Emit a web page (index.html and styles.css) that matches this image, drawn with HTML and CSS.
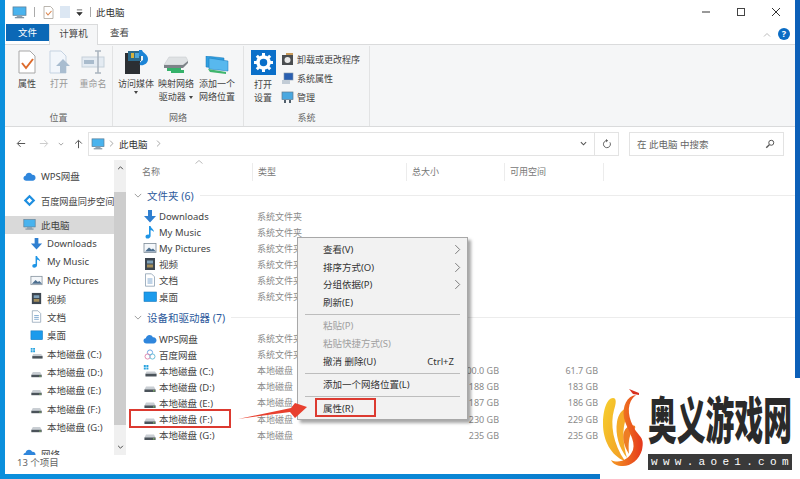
FILE: index.html
```html
<!DOCTYPE html>
<html lang="zh-CN">

<head>
    <meta charset="UTF-8">
    <title>此电脑</title>
    <link rel="stylesheet" href="styles.css">
</head>

<body>
    <svg class="defs" width="0" height="0">
        <defs>
            <symbol id="pc" viewBox="0 0 16 14">
                <rect x="1" y="1" width="14" height="9" fill="#49b3ee" stroke="#5a7d96" stroke-width=".8"/>
                <rect x="5" y="10" width="6" height="2" fill="#8fa3b3"/>
                <rect x="3" y="12" width="10" height="1.2" fill="#6f8494"/>
            </symbol>
            <symbol id="down" viewBox="0 0 14 14">
                <path d="M5 1h4v6h4l-6 6.500L1 7h4z" fill="#2f7fd0"/>
            </symbol>
            <symbol id="music" viewBox="0 0 14 14">
                <path d="M6 1h1.600c.3 2.500 3.400 3 3.400 6-1-1.300-2.200-1.800-3.400-1.800V11c0 1.500-1.500 2.600-3 2.600S2.500 12.800 2.500 11.500 4 9.300 6 9.700z" fill="#1f95e6"/>
            </symbol>
            <symbol id="pics" viewBox="0 0 14 14">
                <rect x="1" y="2.500" width="12" height="9" fill="#f4f7fa" stroke="#7d8b97" stroke-width=".8"/>
                <path d="M2 10.500l4-4 2.500 2 1.500-1 3 3z" fill="#4d6f8f"/>
            </symbol>
            <symbol id="video" viewBox="0 0 14 14">
                <rect x="2" y="1" width="10" height="12" fill="#3d4650"/>
                <rect x="4" y="3.500" width="6" height="3" fill="#7fa0b8"/>
                <rect x="4" y="7.500" width="6" height="3" fill="#a58f5c"/>
            </symbol>
            <symbol id="doc" viewBox="0 0 14 14">
                <path d="M2.500.8h6l3 3v9.400h-9z" fill="#fff" stroke="#8ca0b3" stroke-width=".8"/>
                <path d="M4.500 6h5M4.500 8h5M4.500 10h5" stroke="#5f93c4" stroke-width=".8"/>
            </symbol>
            <symbol id="desk" viewBox="0 0 14 14">
                <rect x="1" y="2" width="12.500" height="9.500" fill="#1b9bec" stroke="#1778bd" stroke-width=".6"/>
            </symbol>
            <symbol id="cloud" viewBox="0 0 14 14">
                <path d="M3.500 11.500C1.700 11.500.5 10.300.5 8.800s1-2.500 2.300-2.600C3.200 4.300 4.700 3 6.500 3c1.500 0 2.800.9 3.300 2.200 2-.4 3.700 1 3.700 3.100 0 1.800-1.300 3.200-3 3.200z" fill="#2f86dc"/>
            </symbol>
            <symbol id="baidu" viewBox="0 0 14 14">
                <path d="M7 2.500L11.500 7 7 11.500 2.500 7z" fill="none" stroke="#1f8fe0" stroke-width="2.400"/>
            </symbol>
            <symbol id="baidu2" viewBox="0 0 14 14">
                <circle cx="7" cy="4.500" r="2.600" fill="none" stroke="#6fa8e6" stroke-width="1"/>
                <circle cx="4.600" cy="8.500" r="2.600" fill="none" stroke="#e28bb0" stroke-width="1"/>
                <circle cx="9.400" cy="8.500" r="2.600" fill="none" stroke="#6fc0d8" stroke-width="1"/>
            </symbol>
            <symbol id="drive" viewBox="0 0 14 14">
                <path d="M3 6.500h8l1.500 3v2.500h-11V9.500z" fill="#c9ced3"/>
                <rect x="1.500" y="9.500" width="11" height="2.500" fill="#4b535a"/>
                <rect x="10" y="10.400" width="1.600" height="1" fill="#8fd06a"/>
            </symbol>
            <symbol id="cdrive" viewBox="0 0 14 14">
                <path d="M3.500 7.500h8.500l1.500 2v3H2.500v-3z" fill="#c9ced3"/>
                <rect x="2.500" y="9.800" width="11" height="2.600" fill="#4b535a"/>
                <path d="M.8 1h2v2h-2zM3.400 1h2v2h-2zM.8 3.600h2v2h-2zM3.400 3.600h2v2h-2z" fill="#28a3df"/>
            </symbol>
            <symbol id="chev-r" viewBox="0 0 8 12">
                <path d="M1.500 1l5 5-5 5" fill="none" stroke="#6a6a6a" stroke-width="1"/>
            </symbol>
        </defs>
    </svg>

    <div class="window">
        <!-- title bar -->
        <div class="titlebar">
            <svg class="tb-pc"><use href="#pc"/></svg>
            <span class="tb-sep"></span>
            <svg class="tb-check" viewBox="0 0 11 13">
                <path d="M1 .5h6.500L10 3v9.500H1z" fill="#fff" stroke="#a9a39a" stroke-width=".8"/>
                <path d="M3 6.500l2 2.500 3.500-4" fill="none" stroke="#d9824a" stroke-width="1.100"/>
            </svg>
            <span class="tb-blank"></span>
            <svg class="tb-drop" viewBox="0 0 8 8"><path d="M1 1h6M1 4h6L4 7.500z" stroke="#333" stroke-width=".8" fill="#333"/></svg>
            <span class="tb-sep"></span>
            <span class="tb-title">此电脑</span>
            <div class="win-btns">
                <svg viewBox="0 0 10 10"><path d="M1 5h8" stroke="#555" stroke-width="1.200"/></svg>
                <svg viewBox="0 0 10 10"><rect x="1.500" y="1.500" width="7" height="7" fill="none" stroke="#444" stroke-width="1"/></svg>
                <svg viewBox="0 0 10 10"><path d="M1 1l8 8M9 1l-8 8" stroke="#333" stroke-width="1"/></svg>
            </div>
        </div>

        <!-- tabs -->
        <div class="tabs">
            <div class="tab tab-file">文件</div>
            <div class="tab tab-active">计算机</div>
            <div class="tab">查看</div>
            <svg class="tab-up" viewBox="0 0 8 5"><path d="M1 4.500l3-3 3 3" fill="none" stroke="#bbb" stroke-width="1"/></svg>
            <div class="help">?</div>
        </div>

        <!-- ribbon -->
        <div class="ribbon">
            <div class="rb-group rb-place">
                <div class="rb-items">
                    <div class="rb-btn w-big">
                        <svg class="rb-ico" viewBox="0 0 24 24">
                            <path d="M4 1h11l5 5v17H4z" fill="#fff" stroke="#a7a7a7"/>
                            <path d="M7 13l4 5 7-9" fill="none" stroke="#dd6b2c" stroke-width="2"/>
                        </svg>
                        <span>属性</span>
                    </div>
                    <div class="rb-btn w-big off">
                        <svg class="rb-ico" viewBox="0 0 24 24">
                            <path d="M3 1h11l5 5v17H3z" fill="#f2f6fb" stroke="#c5d3e2"/>
                            <path d="M16 9l7 7h-4v7h-6v-7H9z" fill="#a9bdd0"/>
                        </svg>
                        <span>打开</span>
                    </div>
                    <div class="rb-btn w-ren off">
                        <svg class="rb-ico" viewBox="0 0 24 24">
                            <rect x="1" y="7" width="22" height="10" fill="#e4ebf2" stroke="#c5d0da"/>
                            <rect x="3" y="10" width="10" height="4" fill="#a9bbcc"/>
                            <path d="M14 1h6M14 23h6M17 1v22" stroke="#a9b4bf" stroke-width="1.500"/>
                        </svg>
                        <span>重命名</span>
                    </div>
                </div>
                <div class="rb-label">位置</div>
            </div>
            <div class="rb-group rb-net">
                <div class="rb-items">
                    <div class="rb-btn w-media">
                        <svg class="rb-ico" viewBox="0 0 24 24">
                            <rect x="1" y="3" width="15" height="21" fill="#2b2f33"/>
                            <rect x="4" y="1" width="13" height="10" fill="#2b6a8c"/>
                            <rect x="7" y="3" width="3" height="5" fill="#d4b23e"/>
                            <rect x="11" y="3" width="4" height="5" fill="#4fa6d8"/>
                            <path d="M15 0h3c.5 3 6 4 6 9 0 5-5 7-8 6-1-2 1-4 3-5V6h-4z" fill="#1c84d6"/>
                        </svg>
                        <span>访问媒体</span>
                        <i class="caret"></i>
                    </div>
                    <div class="rb-btn w-map">
                        <svg class="rb-ico" viewBox="0 0 26 18">
                            <path d="M6 1h17l2 4-5 4H1z" fill="#dfe2e4" stroke="#c2c6ca" stroke-width=".5"/>
                            <path d="M1 9h19l5-4v2l-5 5H1z" fill="#7d8388"/>
                            <path d="M4 12h14v2h3v3H8v-2H4z" fill="#35b26a"/>
                        </svg>
                        <span>映射网络</span>
                        <span>驱动器 <i class="caret inline"></i></span>
                    </div>
                    <div class="rb-btn w-add">
                        <svg class="rb-ico" viewBox="0 0 26 18">
                            <path d="M2 0l18 2v11L2 11z" fill="#2f9fe0" stroke="#1976b8" stroke-width=".5"/>
                            <path d="M5 2l19 3v10L5 13z" fill="#58b8ee" stroke="#1976b8" stroke-width=".5"/>
                            <path d="M4 13l18 3v2L6 16z" fill="#3fb56e"/>
                        </svg>
                        <span>添加一个</span>
                        <span>网络位置</span>
                    </div>
                </div>
                <div class="rb-label">网络</div>
            </div>
            <div class="rb-group rb-sys">
                <div class="rb-items">
                    <div class="rb-btn w-open">
                        <svg class="rb-gear" viewBox="0 0 25 25">
                            <rect width="25" height="25" fill="#0a6fc9"/>
                            <circle cx="12.500" cy="12.500" r="5.500" fill="none" stroke="#fff" stroke-width="3.500"/>
                            <path d="M12.500 3v3.500M12.500 18.500V22M3 12.500h3.500M18.500 12.500H22M5.800 5.800l2.500 2.500M16.700 16.700l2.500 2.500M19.200 5.800l-2.500 2.500M8.300 16.700l-2.500 2.500" stroke="#fff" stroke-width="3"/>
                        </svg>
                        <span>打开</span>
                        <span>设置</span>
                    </div>
                    <div class="rb-small">
                        <div class="rb-sm-row">
                            <svg viewBox="0 0 13 13"><rect x="1" y="2" width="11" height="10" fill="#4a4d50"/><circle cx="6.500" cy="7" r="3" fill="#e8e8e8"/><path d="M5 0h7v2H5z" fill="#c89a5a"/></svg>
                            <span>卸载或更改程序</span>
                        </div>
                        <div class="rb-sm-row">
                            <svg viewBox="0 0 13 13"><rect x="3" y="1" width="9" height="7" fill="#2a5fb0" stroke="#8296aa" stroke-width=".6"/><rect x="1" y="8" width="8" height="4" fill="#c2ccd6"/></svg>
                            <span>系统属性</span>
                        </div>
                        <div class="rb-sm-row">
                            <svg viewBox="0 0 13 13"><rect x="1" y="1" width="11" height="7.500" fill="#4aa8e0" stroke="#5e7a8f" stroke-width=".7"/><path d="M3 9h2v3H3zM8 9h2v3H8z" fill="#52606c"/></svg>
                            <span>管理</span>
                        </div>
                    </div>
                </div>
                <div class="rb-label">系统</div>
            </div>
        </div>

        <!-- address bar -->
        <div class="addrbar">
            <div class="addr-nav">
                <svg class="nb-back" viewBox="0 0 12 10"><path d="M11 5H2M5.500 1L1.500 5l4 4" fill="none" stroke="#555" stroke-width="1.200"/></svg>
                <svg class="nb-fwd" viewBox="0 0 12 10"><path d="M1 5h9M6.500 1l4 4-4 4" fill="none" stroke="#ccc" stroke-width="1.200"/></svg>
                <svg class="nb-drop" viewBox="0 0 8 5"><path d="M1 1l3 3 3-3" fill="none" stroke="#888" stroke-width="1"/></svg>
                <svg class="nb-up" viewBox="0 0 10 12"><path d="M5 11V2M1 5.500l4-4 4 4" fill="none" stroke="#555" stroke-width="1.200"/></svg>
            </div>
            <div class="addr-box">
                <svg class="addr-pc"><use href="#pc"/></svg>
                <svg class="addr-chev"><use href="#chev-r"/></svg>
                <span class="addr-text">此电脑</span>
                <svg class="addr-chev after"><use href="#chev-r"/></svg>
                <svg class="addr-down" viewBox="0 0 8 5"><path d="M1 1l3 3 3-3" fill="none" stroke="#555" stroke-width="1.200"/></svg>
                <div class="addr-refresh">
                    <svg viewBox="0 0 12 12"><path d="M9.500 4A4.200 4.200 0 1 1 6 2H4.500M5 .5L6.800 2 5 3.500" fill="none" stroke="#555" stroke-width="1.100"/></svg>
                </div>
            </div>
            <div class="search-box">
                <span>在 此电脑 中搜索</span>
                <svg viewBox="0 0 12 12"><circle cx="7.500" cy="4.500" r="3" fill="none" stroke="#555" stroke-width="1.200"/><path d="M5.200 6.800L1.500 10.500" stroke="#555" stroke-width="1.600"/></svg>
            </div>
        </div>

        <!-- main -->
        <div class="main">
            <div class="nav">
                <div class="nav-list">
                    <div class="nav-row top"><svg><use href="#cloud"/></svg>WPS网盘</div>
                    <div class="nav-row top gap"><svg><use href="#baidu"/></svg>百度网盘同步空间</div>
                    <div class="nav-row top selected"><svg><use href="#pc"/></svg>此电脑</div>
                    <div class="nav-row"><svg><use href="#down"/></svg>Downloads</div>
                    <div class="nav-row"><svg><use href="#music"/></svg>My Music</div>
                    <div class="nav-row"><svg><use href="#pics"/></svg>My Pictures</div>
                    <div class="nav-row"><svg><use href="#video"/></svg>视频</div>
                    <div class="nav-row"><svg><use href="#doc"/></svg>文档</div>
                    <div class="nav-row"><svg><use href="#desk"/></svg>桌面</div>
                    <div class="nav-row"><svg><use href="#cdrive"/></svg>本地磁盘 (C:)</div>
                    <div class="nav-row"><svg><use href="#drive"/></svg>本地磁盘 (D:)</div>
                    <div class="nav-row"><svg><use href="#drive"/></svg>本地磁盘 (E:)</div>
                    <div class="nav-row"><svg><use href="#drive"/></svg>本地磁盘 (F:)</div>
                    <div class="nav-row"><svg><use href="#drive"/></svg>本地磁盘 (G:)</div>
                    <div class="nav-row top net"><svg><use href="#cloud"/></svg>网络</div>
                </div>
                <div class="nav-scroll">
                    <svg viewBox="0 0 8 5"><path d="M1 4l3-3 3 3" fill="none" stroke="#444" stroke-width="1.200"/></svg>
                    <div class="nav-thumb"></div>
                    <svg viewBox="0 0 8 5"><path d="M1 1l3 3 3-3" fill="none" stroke="#444" stroke-width="1.200"/></svg>
                </div>
            </div>

            <div class="content">
                <div class="col-head">
                    <svg class="sort-up" viewBox="0 0 8 4"><path d="M.5 3.500L4 .5l3.500 3" fill="none" stroke="#aaa" stroke-width=".8"/></svg>
                    <span class="c-name">名称</span>
                    <span class="c-type">类型</span>
                    <span class="c-size">总大小</span>
                    <span class="c-free">可用空间</span>
                </div>
                <div class="group-head">
                    <svg viewBox="0 0 10 6"><path d="M1 1l4 4 4-4" fill="none" stroke="#888" stroke-width="1"/></svg>
                    <span>文件夹 (6)</span><i></i>
                </div>
                <div class="row"><svg><use href="#down"/></svg><span class="c-name">Downloads</span><span class="c-type">系统文件夹</span></div>
                <div class="row"><svg><use href="#music"/></svg><span class="c-name">My Music</span><span class="c-type">系统文件夹</span></div>
                <div class="row"><svg><use href="#pics"/></svg><span class="c-name">My Pictures</span><span class="c-type">系统文件夹</span></div>
                <div class="row"><svg><use href="#video"/></svg><span class="c-name">视频</span><span class="c-type">系统文件夹</span></div>
                <div class="row"><svg><use href="#doc"/></svg><span class="c-name">文档</span><span class="c-type">系统文件夹</span></div>
                <div class="row"><svg><use href="#desk"/></svg><span class="c-name">桌面</span><span class="c-type">系统文件夹</span></div>
                <div class="group-head second">
                    <svg viewBox="0 0 10 6"><path d="M1 1l4 4 4-4" fill="none" stroke="#888" stroke-width="1"/></svg>
                    <span>设备和驱动器 (7)</span><i></i>
                </div>
                <div class="row"><svg><use href="#cloud"/></svg><span class="c-name">WPS网盘</span><span class="c-type">系统文件夹</span></div>
                <div class="row"><svg><use href="#baidu2"/></svg><span class="c-name">百度网盘</span><span class="c-type">系统文件夹</span></div>
                <div class="row"><svg><use href="#cdrive"/></svg><span class="c-name">本地磁盘 (C:)</span><span class="c-type">本地磁盘</span><span class="c-size">100.0 GB</span><span class="c-free">61.7 GB</span></div>
                <div class="row"><svg><use href="#drive"/></svg><span class="c-name">本地磁盘 (D:)</span><span class="c-type">本地磁盘</span><span class="c-size">188 GB</span><span class="c-free">183 GB</span></div>
                <div class="row"><svg><use href="#drive"/></svg><span class="c-name">本地磁盘 (E:)</span><span class="c-type">本地磁盘</span><span class="c-size">187 GB</span><span class="c-free">186 GB</span></div>
                <div class="row"><svg><use href="#drive"/></svg><span class="c-name">本地磁盘 (F:)</span><span class="c-type">本地磁盘</span><span class="c-size">230 GB</span><span class="c-free">229 GB</span></div>
                <div class="row"><svg><use href="#drive"/></svg><span class="c-name">本地磁盘 (G:)</span><span class="c-type">本地磁盘</span><span class="c-size">235 GB</span><span class="c-free">235 GB</span></div>
            </div>
        </div>

        <div class="statusbar">13 个项目</div>
    </div>

    <!-- context menu -->
    <div class="menu">
        <div class="m-item">查看(V)<svg><use href="#chev-r"/></svg></div>
        <div class="m-item">排序方式(O)<svg><use href="#chev-r"/></svg></div>
        <div class="m-item">分组依据(P)<svg><use href="#chev-r"/></svg></div>
        <div class="m-item">刷新(E)</div>
        <div class="m-sep"></div>
        <div class="m-item off">粘贴(P)</div>
        <div class="m-item off">粘贴快捷方式(S)</div>
        <div class="m-item">撤消 删除(U)<span class="m-key">Ctrl+Z</span></div>
        <div class="m-sep"></div>
        <div class="m-item">添加一个网络位置(L)</div>
        <div class="m-sep"></div>
        <div class="m-item">属性(R)</div>
    </div>

    <!-- annotations -->
    <div class="mark mark-drive"></div>
    <div class="mark mark-prop"></div>
    <svg class="mark-arrow" viewBox="0 0 70 20"><path d="M0 19L53 8 57 3 69 7 57 18 52 12z" fill="#e8402f"/></svg>

    <!-- watermark -->
    <div class="wm">
        <svg class="wm-logo" viewBox="0 0 42 80">
            <defs>
                <linearGradient id="flame1" x1="0" y1="0" x2="1" y2="1">
                    <stop offset="0" stop-color="#f6d02e"/>
                    <stop offset="1" stop-color="#f29a24"/>
                </linearGradient>
                <linearGradient id="flame2" x1="0" y1="0" x2="1" y2="0">
                    <stop offset="0" stop-color="#f59a22"/>
                    <stop offset="1" stop-color="#e5371c"/>
                </linearGradient>
            </defs>
            <path d="M26 1l10 4 0 2-6-1z" fill="#d8301e"/>
            <path d="M22 73C8 68 0 52 0 36 0 22 4 10 10 10c4 0 3 6 1 12-4 14-1 34 11 51z" fill="url(#flame1)"/>
            <path d="M24 70C16 60 12 46 14 34c1-8 6-14 10-13 3 1 1 6-1 10-4 9-3 25 1 39z" fill="#f5ab28"/>
            <path d="M26 66c-5-8-7-16-5-22 2-6 8-8 11-6 1 2-1 4-3 6-3 4-4 12-3 22z" fill="#ee7d24"/>
            <path d="M33 7c-9 7-9 19-3 31 6 12 12 10 9 24-3 10-11 16-19 16-6 0-10-2-12-6 8 4 18 0 22-10 3-10-6-20-9-32-2-12 3-22 12-23z" fill="url(#flame2)"/>
        </svg>
        <div class="wm-right">
            <div class="wm-name"><span>奥义游戏网</span></div>
            <div class="wm-url">www.aoe1.com</div>
        </div>
    </div>
</body>

</html>
```

FILE: styles.css
```css
/* Basic reset */
* {
    margin: 0;
    padding: 0;
    box-sizing: border-box;
}

html,
body {
    width: 800px;
    height: 479px;
    overflow: hidden;
}

body {
    font-family: "Noto Sans", "Noto Sans CJK SC", sans-serif;
    font-size: 9.5px;
    color: #444;
    background: linear-gradient(90deg, #0b8fdc 0%, #0a86d4 60%, #0c5fb8 100%);
    padding: 0 5px 5px 5px;
    position: relative;
}

.defs {
    position: absolute;
}

.window {
    width: 790px;
    height: 474px;
    background-color: #ffffff;
    display: flex;
    flex-direction: column;
}

/* title bar */
.titlebar {
    height: 24px;
    display: flex;
    align-items: center;
    padding-left: 7px;
    flex-shrink: 0;
}

.tb-pc {
    width: 15px;
    height: 13px;
}

.tb-sep {
    width: 1px;
    height: 10px;
    background-color: #aaa;
    margin-left: 7px;
}

.tb-check {
    width: 11px;
    height: 13px;
    margin-left: 8px;
}

.tb-blank {
    width: 10px;
    height: 12px;
    background-color: #dce7f3;
    margin-left: 6px;
}

.tb-drop {
    width: 7px;
    height: 7px;
    margin-left: 6px;
}

.tb-title {
    font-size: 9.5px;
    color: #333;
    margin-left: 5px;
}

.win-btns {
    margin-left: auto;
    display: flex;
}

.win-btns svg {
    width: 10px;
    height: 10px;
    margin-right: 25px;
}

.win-btns svg:last-child {
    margin-right: 14px;
}

/* tabs */
.tabs {
    height: 21px;
    display: flex;
    align-items: flex-start;
    border-bottom: 1px solid #dadbdc;
    padding-left: 1px;
    flex-shrink: 0;
    position: relative;
}

.tab {
    height: 17px;
    line-height: 17px;
    padding: 0 12px;
    font-size: 9.5px;
    color: #444;
}

.tab-file {
    width: 43px;
    background-color: #0b68b6;
    color: #ffffff;
    text-align: center;
    padding: 0;
}

.tab-active {
    width: 49px;
    height: 21px;
    padding: 0;
    text-align: center;
    line-height: 18px;
    background-color: #f5f6f7;
    border: 1px solid #dadbdc;
    border-bottom: none;
    margin-right: 0;
}

.tab-up {
    width: 8px;
    height: 5px;
    margin-left: auto;
    margin-top: 8px;
}

.help {
    width: 12px;
    height: 12px;
    border-radius: 50%;
    background-color: #0b6cc4;
    color: #ffffff;
    font-size: 9px;
    font-weight: 700;
    line-height: 12px;
    text-align: center;
    margin: 4px 5px 0 7px;
}

/* ribbon */
.ribbon {
    height: 82px;
    background-color: #f5f6f7;
    border-bottom: 1px solid #dadbdc;
    display: flex;
    flex-shrink: 0;
}

.rb-group {
    display: flex;
    flex-direction: column;
    border-right: 1px solid #e2e3e4;
    margin: 1px 0;
    height: 80px;
}

.rb-place {
    width: 108px;
}

.rb-net {
    width: 131px;
}

.rb-sys {
    width: 126px;
}

.rb-items {
    display: flex;
    height: 65px;
    padding-top: 4px;
}

.rb-label {
    text-align: center;
    color: #666;
    font-size: 9px;
    line-height: 13px;
}

.rb-btn {
    display: flex;
    flex-direction: column;
    align-items: center;
    font-size: 9px;
    line-height: 13px;
    white-space: nowrap;
}

.rb-btn.off {
    color: #999;
}

.rb-ico {
    width: 24px;
    height: 24px;
    margin-bottom: 3px;
    flex-shrink: 0;
}

.w-big {
    width: 30px;
}

.rb-place .rb-btn:first-child {
    margin-left: 7px;
}

.w-big + .w-big {
    margin-left: 2px;
}

.w-ren {
    width: 30px;
    margin-left: 4px;
}

.w-media {
    width: 38px;
    margin-left: 4px;
}

.w-map {
    width: 38px;
    margin-left: 2px;
}

.w-map .rb-ico,
.w-add .rb-ico {
    width: 26px;
    height: 18px;
    margin-top: 6px;
    margin-bottom: 3px;
}

.w-add {
    width: 38px;
    margin-left: 3px;
}

.caret {
    width: 0;
    height: 0;
    border-left: 2.5px solid transparent;
    border-right: 2.5px solid transparent;
    border-top: 3px solid #444;
    margin-top: 1px;
}

.caret.inline {
    display: inline-block;
    vertical-align: middle;
    margin: 0 0 0 1px;
}

.w-open {
    width: 26px;
    margin-left: 6px;
}

.rb-gear {
    width: 25px;
    height: 25px;
    margin-bottom: 3px;
}

.rb-small {
    margin-left: 5px;
    display: flex;
    flex-direction: column;
    gap: 6px;
    padding-top: 3px;
}

.rb-sm-row {
    display: flex;
    align-items: center;
    height: 13px;
    gap: 3px;
    font-size: 9px;
    white-space: nowrap;
}

.rb-sm-row svg {
    width: 13px;
    height: 13px;
}

/* address bar */
.addrbar {
    height: 33px;
    display: flex;
    align-items: center;
    flex-shrink: 0;
}

.addr-nav {
    width: 83px;
    display: flex;
    align-items: center;
    padding-left: 11px;
}

.nb-back,
.nb-fwd {
    width: 10px;
    height: 9px;
}

.nb-fwd {
    margin-left: 13px;
}

.nb-drop {
    width: 6px;
    height: 4px;
    margin-left: 9px;
}

.nb-up {
    width: 9px;
    height: 10px;
    margin-left: 10px;
}

.addr-box {
    width: 531px;
    height: 24px;
    border: 1px solid #e3e3e3;
    display: flex;
    align-items: center;
    padding-left: 2px;
}

.addr-pc {
    width: 14px;
    height: 12px;
}

.addr-chev {
    width: 5px;
    height: 7px;
    margin-left: 4px;
}

.addr-chev.after {
    margin-left: 8px;
}

.addr-text {
    color: #333;
    margin-left: 5px;
    font-size: 9.5px;
}

.addr-down {
    width: 7px;
    height: 5px;
    margin-left: auto;
    margin-right: 7px;
}

.addr-refresh {
    width: 24px;
    height: 22px;
    border-left: 1px solid #e3e3e3;
    display: flex;
    align-items: center;
    justify-content: center;
}

.addr-refresh svg {
    width: 10px;
    height: 10px;
}

.search-box {
    width: 155px;
    height: 24px;
    border: 1px solid #e3e3e3;
    margin-left: 10px;
    display: flex;
    align-items: center;
    justify-content: space-between;
    padding: 0 8px 0 7px;
    color: #666;
    font-size: 9.5px;
}

.search-box svg {
    width: 10px;
    height: 10px;
}

/* main */
.main {
    flex: 1;
    min-height: 0;
    display: flex;
    overflow: hidden;
}

.nav {
    width: 121px;
    display: flex;
    flex-shrink: 0;
}

.nav-list {
    width: 109px;
    padding-top: 7px;
    overflow: hidden;
}

.nav-row {
    height: 18.4px;
    display: flex;
    align-items: center;
    padding-left: 26px;
    white-space: nowrap;
    font-size: 9.5px;
    color: #444;
}

.nav-row svg {
    width: 13px;
    height: 13px;
    margin-right: 4px;
    margin-left: -1px;
    flex-shrink: 0;
}

.nav-row.top {
    padding-left: 19px;
}

.nav-row.top svg {
    margin-right: 5px;
}

.nav-row.gap {
    margin-top: 6px;
    font-size: 9.2px;
}

.nav-row.selected {
    margin-top: 6px;
    background-color: #d9d9d9;
}

.nav-row.net {
    margin-top: 8px;
}

.nav-scroll {
    width: 12px;
    background-color: #f0f0f0;
    display: flex;
    flex-direction: column;
    align-items: center;
    justify-content: space-between;
    padding: 6px 0;
}

.nav-scroll svg {
    width: 7px;
    height: 4px;
}

.nav-thumb {
    width: 12px;
    height: 233px;
    background-color: #cdcdcd;
    margin-top: 18px;
    margin-bottom: 16px;
}

.content {
    flex: 1;
    min-width: 0;
    padding-left: 8px;
}

.col-head {
    height: 23px;
    display: flex;
    align-items: center;
    color: #777;
    font-size: 9px;
    position: relative;
}

.sort-up {
    position: absolute;
    left: 61px;
    top: 0;
    width: 8px;
    height: 4px;
}

.c-name {
    width: 114px;
    flex-shrink: 0;
}

.c-type {
    width: 115px;
    flex-shrink: 0;
}

.c-size {
    width: 127px;
    flex-shrink: 0;
    text-align: right;
}

.c-free {
    width: 99px;
    flex-shrink: 0;
    text-align: right;
}

.col-head span {
    height: 18px;
    line-height: 18px;
    border-right: 1px solid #ececec;
}

.col-head .c-name {
    width: 111px;
    margin-left: 8px;
    padding-right: 0;
}

.col-head .c-type {
    width: 154px;
    padding-left: 5px;
}

.col-head .c-size {
    width: 98px;
    padding-left: 5px;
    text-align: left;
}

.col-head .c-free {
    width: 99px;
    padding-left: 5px;
    text-align: left;
}

.group-head {
    height: 22px;
    display: flex;
    align-items: center;
    color: #2d5a9c;
    font-size: 10.5px;
    margin-top: 1px;
    margin-bottom: 2px;
}

.group-head svg {
    width: 8px;
    height: 5px;
    margin-right: 5px;
}

.group-head i {
    flex: 1;
    height: 1px;
    background-color: #ececec;
    margin-left: 6px;
}

.group-head.second {
    margin-top: 2px;
}

.row {
    height: 16.1px;
    display: flex;
    align-items: center;
    font-size: 9.5px;
    color: #444;
    padding-left: 9px;
    white-space: nowrap;
}

.row svg {
    width: 14px;
    height: 14px;
    margin-right: 2px;
    flex-shrink: 0;
}

.row .c-name {
    width: 98px;
}

.row .c-type,
.row .c-size,
.row .c-free {
    color: #8a8a8a;
    font-size: 9px;
}

.statusbar {
    height: 19px;
    line-height: 16px;
    padding-left: 12px;
    color: #666;
    font-size: 9.5px;
    flex-shrink: 0;
    background-color: #ffffff;
}

/* context menu */
.menu {
    position: absolute;
    left: 297px;
    top: 237px;
    width: 171px;
    height: 183px;
    background-color: #f2f2f2;
    border: 1px solid #a8a8a8;
    box-shadow: 3px 3px 3px rgba(0, 0, 0, 0.35);
    padding: 3px 0;
    font-size: 9.5px;
    color: #333;
}

.m-item {
    height: 17.7px;
    line-height: 17.7px;
    padding-left: 25px;
    position: relative;
    white-space: nowrap;
}

.m-item.off {
    color: #a0a0a0;
}

.m-item svg {
    position: absolute;
    right: 6px;
    top: 3px;
    width: 7px;
    height: 11px;
}

.m-key {
    position: absolute;
    right: 13px;
}

.m-sep {
    height: 1px;
    background-color: #bdbdbd;
    margin: 2.400px 7px 2.300px 7px;
}

/* red annotations */
.mark {
    position: absolute;
    border: 2px solid #dc3a30;
}

.mark-drive {
    left: 129px;
    top: 409px;
    width: 102px;
    height: 19px;
}

.mark-prop {
    left: 315px;
    top: 398px;
    width: 61px;
    height: 19px;
}

.mark-arrow {
    position: absolute;
    left: 238px;
    top: 400px;
    width: 70px;
    height: 20px;
}

/* watermark */
.wm {
    position: absolute;
    left: 600px;
    top: 378px;
    width: 200px;
    height: 101px;
    background-color: #ffffff;
    display: flex;
    padding: 10px 8px 0 3px;
}

.wm-logo {
    width: 42px;
    height: 80px;
    flex-shrink: 0;
}

.wm-right {
    margin-left: 3px;
    width: 144px;
}

.wm-name {
    height: 62px;
}

.wm-name span {
    display: block;
    font-family: "Noto Sans CJK SC", sans-serif;
    font-weight: 900;
    font-size: 28.8px;
    line-height: 29px;
    color: #2a2a2a;
    white-space: nowrap;
    transform: scaleY(1.75);
    transform-origin: 0 0;
    margin-top: 4px;
}

.wm-url {
    height: 16px;
    line-height: 16px;
    background-color: #3a3a3a;
    color: #ffffff;
    font-family: "Liberation Mono", monospace;
    font-size: 11px;
    letter-spacing: 5.300px;
    padding-left: 3px;
    white-space: nowrap;
}
```
